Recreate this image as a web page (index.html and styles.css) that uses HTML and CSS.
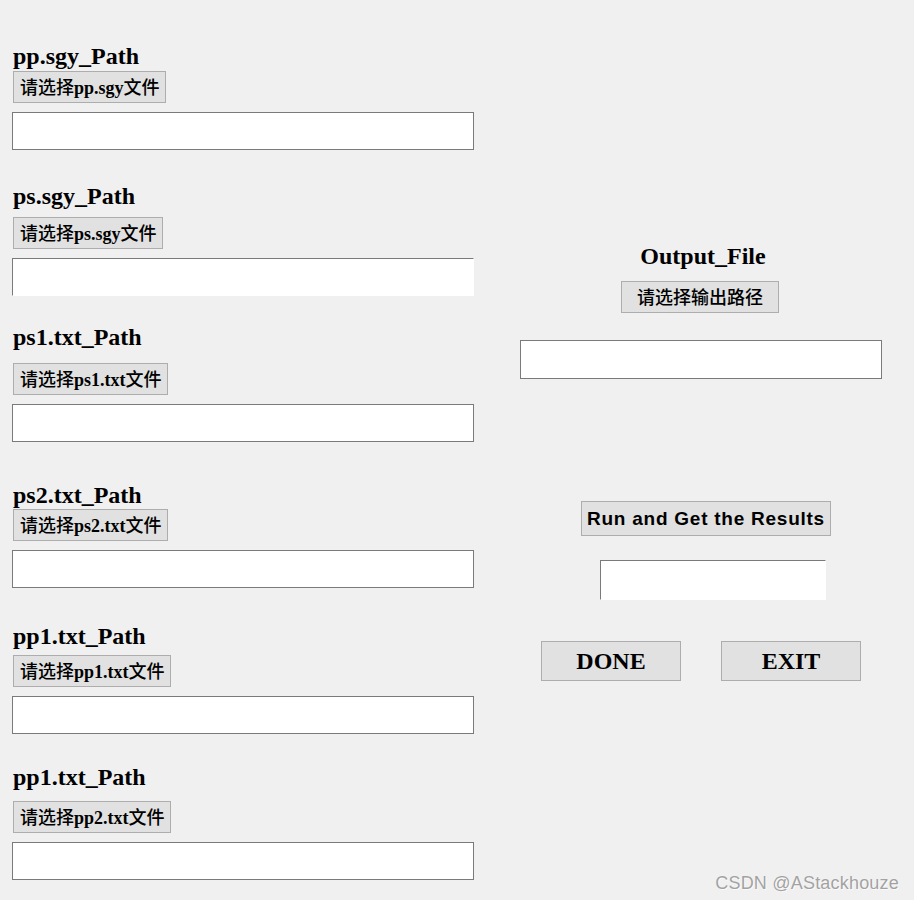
FILE: index.html
```html
<!DOCTYPE html>
<html lang="zh">
<head>
<meta charset="utf-8">
<title>Path Selector</title>
<link rel="stylesheet" href="styles.css">
</head>
<body>
<div class="window">
  <div class="files">
    <section class="field">
      <div class="field-head head-1"><h2 class="field-label">pp.sgy_Path</h2></div>
      <button class="pick"><span class="cjk">请选择</span>pp.sgy<span class="cjk">文件</span></button>
      <input class="path" type="text">
    </section>
    <section class="field">
      <div class="field-head head-2"><h2 class="field-label">ps.sgy_Path</h2></div>
      <button class="pick"><span class="cjk">请选择</span>ps.sgy<span class="cjk">文件</span></button>
      <input class="path path-open" type="text">
    </section>
    <section class="field">
      <div class="field-head head-3"><h2 class="field-label">ps1.txt_Path</h2></div>
      <button class="pick"><span class="cjk">请选择</span>ps1.txt<span class="cjk">文件</span></button>
      <input class="path" type="text">
    </section>
    <section class="field">
      <div class="field-head head-4"><h2 class="field-label">ps2.txt_Path</h2></div>
      <button class="pick"><span class="cjk">请选择</span>ps2.txt<span class="cjk">文件</span></button>
      <input class="path" type="text">
    </section>
    <section class="field">
      <div class="field-head head-5"><h2 class="field-label">pp1.txt_Path</h2></div>
      <button class="pick"><span class="cjk">请选择</span>pp1.txt<span class="cjk">文件</span></button>
      <input class="path" type="text">
    </section>
    <section class="field">
      <div class="field-head head-6"><h2 class="field-label">pp1.txt_Path</h2></div>
      <button class="pick"><span class="cjk">请选择</span>pp2.txt<span class="cjk">文件</span></button>
      <input class="path" type="text">
    </section>
  </div>

  <div class="output">
    <h2 class="field-label output-label">Output_File</h2>
    <button class="pick output-pick"><span class="cjk">请选择输出路径</span></button>
    <input class="output-path" type="text">
    <button class="run">Run and Get the Results</button>
    <input class="result" type="text">
    <div class="actions">
      <button class="action">DONE</button>
      <button class="action">EXIT</button>
    </div>
  </div>

  <div class="watermark">CSDN @AStackhouze</div>
</div>
</body>
</html>
```

FILE: styles.css
```css
html, body {
  margin: 0;
  padding: 0;
}

body {
  background: #f0f0f0;
  color: #000;
  font-family: "Liberation Serif", "Noto Sans CJK SC", serif;
}

.window {
  position: relative;
  display: flex;
  align-items: flex-start;
  width: 914px;
  height: 900px;
  overflow: hidden;
}

/* ---------- left column ---------- */
.files {
  width: 520px;
  box-sizing: border-box;
  padding: 31px 0 0 12px;
  display: flex;
  flex-direction: column;
}

.field {
  height: 146px;
  display: flex;
  flex-direction: column;
  align-items: flex-start;
}

.field-head {
  height: 40px;
  box-sizing: border-box;
  padding-left: 1px;
}

.head-1 { padding-top: 12px; }
.head-2 { padding-top: 6px; }
.head-3 { padding-top: 1px; }
.head-4 { padding-top: 13px; }
.head-5 { padding-top: 8px; }
.head-6 { padding-top: 3px; }

.field-label {
  margin: 0;
  font-family: "Liberation Serif", serif;
  font-weight: 700;
  font-size: 24px;
  line-height: 26px;
  color: #000;
  white-space: nowrap;
}

.pick {
  margin: 0 0 0 1px;
  height: 32px;
  padding: 0 5px 0 6px;
  box-sizing: border-box;
  border: 1px solid #adadad;
  border-radius: 0;
  background: #e1e1e1;
  color: #000;
  font-family: "Liberation Serif", "Noto Sans CJK SC", serif;
  font-weight: 700;
  font-size: 18px;
  line-height: 28px;
  white-space: nowrap;
}

.cjk {
  font-family: "Noto Sans CJK SC", sans-serif;
  font-weight: 500;
}

.path {
  margin-top: 9px;
  width: 462px;
  height: 38px;
  box-sizing: border-box;
  border: 1px solid #7a7a7a;
  border-radius: 0;
  background: #fff;
  padding: 0 4px;
  outline: none;
}

.path-open {
  border-right-color: #fff;
  border-bottom-color: #fff;
}

/* ---------- right column ---------- */
.output {
  width: 362px;
  box-sizing: border-box;
  padding-top: 243px;
  display: flex;
  flex-direction: column;
  align-items: center;
}

.output-label {
  margin-left: 4px;
}

.output-pick {
  margin: 12px 0 0 -2px;
  width: 158px;
  padding: 0;
}

.output-path {
  margin-top: 27px;
  width: 362px;
  height: 39px;
  box-sizing: border-box;
  border: 1px solid #7a7a7a;
  border-radius: 0;
  background: #fff;
  outline: none;
}

.run {
  margin: 122px 0 0 10px;
  width: 250px;
  height: 35px;
  padding: 0;
  box-sizing: border-box;
  border: 1px solid #adadad;
  border-radius: 0;
  background: #e1e1e1;
  color: #000;
  font-family: "Liberation Sans", Arial, sans-serif;
  font-weight: 700;
  font-size: 19px;
  letter-spacing: 0.75px;
  white-space: nowrap;
}

.result {
  margin: 24px 0 0 24px;
  width: 226px;
  height: 40px;
  box-sizing: border-box;
  border: 1px solid #7a7a7a;
  border-right-color: #fff;
  border-bottom-color: #fff;
  border-radius: 0;
  background: #fff;
  outline: none;
}

.actions {
  margin-top: 41px;
  display: flex;
  gap: 40px;
}

.action {
  width: 140px;
  height: 40px;
  padding: 0;
  box-sizing: border-box;
  border: 1px solid #adadad;
  border-radius: 0;
  background: #e1e1e1;
  color: #000;
  font-family: "Liberation Serif", serif;
  font-weight: 700;
  font-size: 24px;
}

/* ---------- watermark ---------- */
.watermark {
  position: absolute;
  right: 15px;
  bottom: 6px;
  font-family: "Liberation Sans", Arial, sans-serif;
  font-size: 18px;
  letter-spacing: 0.2px;
  color: #a2a2a2;
  text-shadow: 0 0 1px #fff, 1px 1px 0 #fafafa;
  white-space: nowrap;
}
```
